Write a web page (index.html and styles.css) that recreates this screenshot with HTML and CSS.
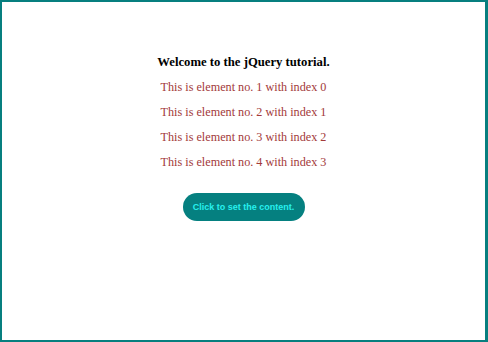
FILE: index.html
```html
<!DOCTYPE html>
<html lang="en">
<head>
    <meta charset="UTF-8">
    <meta name="viewport" content="width=device-width, initial-scale=1.0">
    <title>jQuery tutorial</title>
    <link rel="stylesheet" href="styles.css">
</head>
<body>
    <div class="frame">
        <h3 class="title">Welcome to the jQuery tutorial.</h3>
        <div class="items">
            <p class="item">This is element no. 1 with index 0</p>
            <p class="item">This is element no. 2 with index 1</p>
            <p class="item">This is element no. 3 with index 2</p>
            <p class="item">This is element no. 4 with index 3</p>
        </div>
        <button class="set-btn">Click to set the content.</button>
    </div>
</body>
</html>
```

FILE: styles.css
```css
html, body {
    margin: 0;
    height: 100%;
}

body {
    font-family: "Liberation Serif", "Times New Roman", serif;
    background: #fff;
}

.frame {
    box-sizing: border-box;
    height: 342px;
    border: 2px solid #077f7f;
    border-right-width: 3px;
    display: flex;
    flex-direction: column;
    align-items: center;
    padding-top: 51px;
}

.title {
    margin: 0;
    font-size: 12.7px;
    font-weight: bold;
    line-height: 18px;
    color: #000;
}

.items {
    display: flex;
    flex-direction: column;
    align-items: center;
    gap: 7px;
    margin-top: 7px;
}

.item {
    margin: 0;
    font-size: 12.2px;
    line-height: 18px;
    color: #a33a3a;
}

.set-btn {
    margin-top: 22px;
    width: 122px;
    height: 28px;
    border: none;
    border-radius: 14px;
    background: #058080;
    color: #27f0ee;
    font-family: "Liberation Sans", Arial, sans-serif;
    font-weight: bold;
    font-size: 9px;
    padding: 0;
}
```
